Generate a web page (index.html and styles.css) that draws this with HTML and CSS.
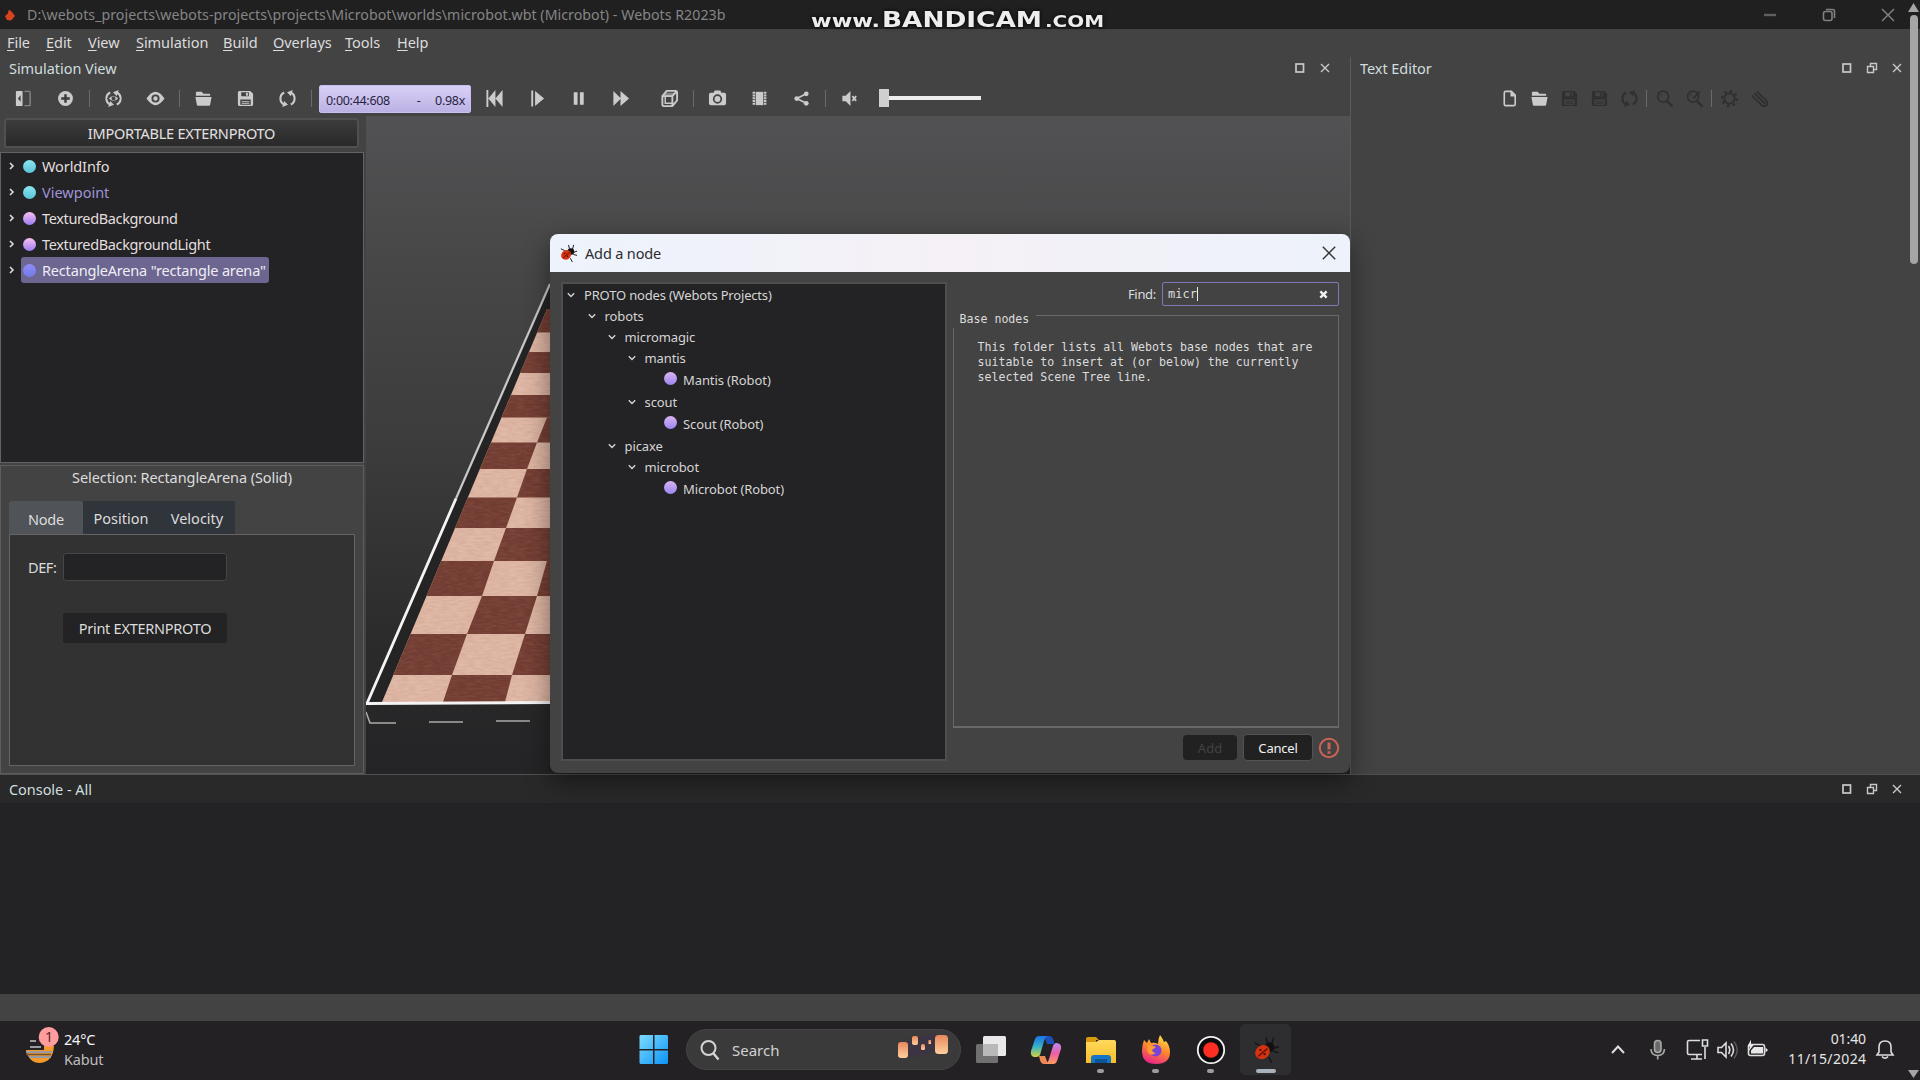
FILE: index.html
```html
<!DOCTYPE html>
<html lang="en">
<head>
<meta charset="utf-8">
<title>Webots R2023b</title>
<link rel="stylesheet" href="styles.css">
</head>
<body>
<svg class="defs" width="0" height="0" aria-hidden="true">
  <defs>
    <linearGradient id="fox" x1="0.7" y1="0" x2="0.3" y2="1"><stop offset="0" stop-color="#ffe14d"/><stop offset=".45" stop-color="#ff8a2a"/><stop offset="1" stop-color="#e9218c"/></linearGradient>
    <linearGradient id="win" x1="0" y1="0" x2="1" y2="1"><stop offset="0" stop-color="#7fdcff"/><stop offset="1" stop-color="#0b93f5"/></linearGradient>
    <linearGradient id="cop1" x1="0" y1="0" x2="0" y2="1"><stop offset="0" stop-color="#1b72e8"/><stop offset=".5" stop-color="#35b0c8"/><stop offset="1" stop-color="#d5d53c"/></linearGradient>
    <linearGradient id="cop2" x1="0" y1="0" x2="0" y2="1"><stop offset="0" stop-color="#b98bf5"/><stop offset=".5" stop-color="#ec5fa5"/><stop offset="1" stop-color="#ff9b5e"/></linearGradient>
    <linearGradient id="lamp" x1="0" y1="0" x2="0" y2="1"><stop offset="0" stop-color="#e8875c"/><stop offset="1" stop-color="#ffd09c"/></linearGradient>
    <linearGradient id="folder" x1="0" y1="0" x2="0" y2="1"><stop offset="0" stop-color="#ffd95e"/><stop offset="1" stop-color="#f8bd26"/></linearGradient>
  </defs>
  <symbol id="i-save" viewBox="0 0 20 20"><path fill="currentColor" fill-rule="evenodd" d="M3 2h12l3 3v11a2 2 0 0 1-2 2H4a2 2 0 0 1-2-2V3.500z M5.500 3.500v4h8v-4z M4.500 11v5.500h11V11z"/><path fill="currentColor" d="M10.500 4h2v3h-2zM6 12.500h8v1H6zM6 14.500h8v1H6z"/></symbol>
  <symbol id="i-open" viewBox="0 0 20 20"><path fill="currentColor" d="M2 7V4q0-1 1-1h5l2 2h6q1 0 1 1v1zM1.500 8.500h17L17 16.500q-.2 1-1.200 1H4.200q-1 0-1.200-1z"/></symbol>
  <symbol id="i-reload" viewBox="0 0 20 20"><path fill="none" stroke="currentColor" stroke-width="2.200" d="M6.500 3.700A7 7 0 0 0 6.500 16.300M13.500 16.300A7 7 0 0 0 13.500 3.700"/><path fill="currentColor" d="M4.500 19l6-2.300-4-4.200zM15.500 1l-6 2.300 4 4.200z"/></symbol>
  <symbol id="i-lens" viewBox="0 0 20 20"><circle cx="8.500" cy="8" r="5.800" fill="none" stroke="currentColor" stroke-width="1.800"/><path stroke="currentColor" stroke-width="2.600" d="M12.500 12.500l6 6"/><path fill="none" stroke="currentColor" d="M5.500 8a3 3 0 0 1 2-3"/></symbol>
  <symbol id="i-max" viewBox="0 0 12 12"><rect x="2" y="2" width="7.500" height="8" fill="none" stroke="currentColor" stroke-width="1.700"/></symbol>
  <symbol id="i-float" viewBox="0 0 12 12"><path fill="none" stroke="currentColor" stroke-width="1.400" d="M1.500 4.500h6v6h-6zM4.500 4V1.500h6v6H8"/></symbol>
  <symbol id="i-x" viewBox="0 0 12 12"><path stroke="currentColor" stroke-width="1.400" d="M2 2l8 8M10 2l-8 8"/></symbol>
  <symbol id="i-right" viewBox="0 0 10 10"><path fill="none" stroke="currentColor" stroke-width="1.600" d="M3 2L6 5 3 8"/></symbol>
  <symbol id="i-down" viewBox="0 0 10 10"><path fill="none" stroke="currentColor" stroke-width="1.400" d="M1.800 3.200L5 6.400l3.200-3.200"/></symbol>
  <symbol id="i-bug" viewBox="0 0 20 20"><path fill="none" stroke="#15151a" stroke-width="1" d="M11 5l-1-4M14 6l1.500-5M15 9l4-1.500M15 11l4 1M12 15l2 4M6 7L2 5"/><circle cx="12.500" cy="8" r="3.500" fill="#111"/><ellipse cx="7.500" cy="11.500" rx="5.500" ry="4.800" transform="rotate(-40 7.500 11.500)" fill="#d7320f"/><path stroke="#5c1205" d="M4.500 14.500L11 9"/><circle cx="6" cy="10" r=".8" fill="#3a0d05"/><circle cx="9" cy="13" r=".8" fill="#3a0d05"/></symbol>
</svg>

<header class="titlebar">
  <svg class="app-icon" viewBox="0 0 12 14"><path fill="#d8431d" d="M5 1.500L8 4l3 4-4 4.500L3 12 1 8l2.500-2z"/></svg>
  <span class="win-title">D:\webots_projects\webots-projects\projects\Microbot\worlds\microbot.wbt (Microbot) - Webots R2023b</span>
  <div class="win-buttons">
    <svg width="14" height="14"><path stroke="#606060" stroke-width="2.400" d="M1 7h12"/></svg>
    <svg width="14" height="14" fill="none" stroke="#808080" stroke-width="1.600"><rect x="1.500" y="3.500" width="8.500" height="9" rx="2"/><path d="M4 1.500h6.500q2 0 2 2V10"/></svg>
    <svg width="14" height="14" stroke="#858585" stroke-width="1.400"><path d="M1 1l12 12M13 1L1 13"/></svg>
  </div>
</header>

<nav class="menubar">
  <span><u>F</u>ile</span><span><u>E</u>dit</span><span><u>V</u>iew</span><span><u>S</u>imulation</span><span><u>B</u>uild</span><span><u>O</u>verlays</span><span><u>T</u>ools</span><span><u>H</u>elp</span>
</nav>

<main class="docks">
  <section class="sim">
    <div class="dock-title">Simulation View
      <div class="dock-buttons"><svg><use href="#i-max"/></svg><svg><use href="#i-x"/></svg></div>
    </div>
    <div class="toolbar">
      <span class="tool"><svg viewBox="0 0 20 20"><path fill="currentColor" fill-rule="evenodd" d="M3 2h6v16H3q-1 0-1-1V3q0-1 1-1zM7 6.500L4 10l3 3.500z"/><path fill="none" stroke="#858585" stroke-width="1.500" d="M11 2.500h5q1 0 1 1v13q0 1-1 1h-5"/></svg></span>
      <span class="tool"><svg viewBox="0 0 20 20"><circle cx="10" cy="10" r="7.800" fill="currentColor"/><path stroke="#3d3d3e" stroke-width="2.600" d="M10 5.500v9M5.500 10h9"/></svg></span>
      <i class="sep"></i>
      <span class="tool"><svg><use href="#i-reload"/></svg><svg class="over" viewBox="0 0 20 20"><path fill="currentColor" stroke="#434344" stroke-width="1.500" fill-rule="evenodd" d="M2.500 10q7.500-8 15 0-7.500 8-15 0zM10 8a2 2 0 1 0 .1 0z"/></svg></span>
      <span class="tool"><svg viewBox="0 0 20 20"><path fill="currentColor" d="M.5 10Q10-4 19.500 10 10 24 .5 10z"/><circle cx="10" cy="10" r="3.300" fill="currentColor" stroke="#434344" stroke-width="2"/></svg></span>
      <i class="sep"></i>
      <span class="tool"><svg><use href="#i-open"/></svg></span>
      <span class="tool"><svg><use href="#i-save"/></svg></span>
      <span class="tool"><svg><use href="#i-reload"/></svg></span>
      <i class="sep"></i>
      <div class="clock"><span>0:00:44:608</span><span>-</span><span>0.98x</span></div>
      <span class="tool"><svg viewBox="0 0 20 20"><path fill="currentColor" d="M1.500 1h2v18h-2zM11 1v18L3.500 10zM18.500 1v18L11 10z"/></svg></span>
      <span class="tool"><svg viewBox="0 0 20 20"><path fill="currentColor" d="M4.500 1.500h2v17h-2zM8.500 2L18 10l-9.500 8z"/></svg></span>
      <span class="tool"><svg viewBox="0 0 20 20"><path fill="currentColor" d="M5 3.500h4v13H5zM11.500 3.500h4v13h-4z"/></svg></span>
      <span class="tool"><svg viewBox="0 0 20 20"><path fill="currentColor" d="M2.500 2l8 8-8 8zM10 2l9 8-9 8z"/></svg></span>
      <span class="tool cube"><svg viewBox="0 0 20 20"><path fill="none" stroke="currentColor" stroke-width="2" d="M3 7l4-5h9.500q1.500 0 1.500 1.500V12l-5 6H4q-1.500 0-1.500-1.500V7.500H13V18M13 7.500l4.500-5"/><path fill="currentColor" d="M3 7l3-3h11l-4 4z" opacity=".5"/><path fill="none" stroke="currentColor" stroke-width="1.500" d="M5.500 8v7H13"/></svg></span>
      <i class="sep"></i>
      <span class="tool"><svg viewBox="0 0 20 20"><path fill="currentColor" d="M6 4l1-2.500h6L14 4h3q2 0 2 2v9q0 2-2 2H3q-2 0-2-2V6q0-2 2-2z"/><circle cx="10" cy="10.500" r="4" fill="none" stroke="#434344" stroke-width="1.800"/></svg></span>
      <span class="tool"><svg viewBox="0 0 20 20"><path fill="currentColor" d="M6 3h8v14H6z"/><path stroke="currentColor" stroke-width="2.500" stroke-dasharray="1.900 1" d="M4 3v14.500M16 3v14.500"/></svg></span>
      <span class="tool"><svg viewBox="0 0 20 20"><path stroke="currentColor" stroke-width="1.700" fill="none" d="M15 5L5 10l10 5"/><g fill="currentColor"><circle cx="15" cy="5" r="2.500"/><circle cx="5" cy="10" r="2.500"/><circle cx="15" cy="15" r="2.500"/></g></svg></span>
      <i class="sep"></i>
      <span class="tool"><svg viewBox="0 0 20 20"><path fill="currentColor" d="M2.500 7H6l5-5v16l-5-5H2.500z"/><path stroke="currentColor" stroke-width="1.800" d="M13 7.500l4 5M17 7.500l-4 5"/></svg></span>
      <div class="slider"><b></b></div>
    </div>

    <div class="sim-body">
      <aside class="side">
        <div class="extern">IMPORTABLE EXTERNPROTO</div>
        <div class="scene-tree">
          <div class="node"><svg><use href="#i-right"/></svg><span><i class="ball cyan"></i>WorldInfo</span></div>
          <div class="node view"><svg><use href="#i-right"/></svg><span><i class="ball cyan"></i>Viewpoint</span></div>
          <div class="node tight"><svg><use href="#i-right"/></svg><span><i class="ball pink"></i>TexturedBackground</span></div>
          <div class="node tight"><svg><use href="#i-right"/></svg><span><i class="ball pink"></i>TexturedBackgroundLight</span></div>
          <div class="node picked"><svg><use href="#i-right"/></svg><span><i class="ball blue"></i>RectangleArena "rectangle arena"</span></div>
        </div>
        <div class="selection">
          <div class="sel-title">Selection: RectangleArena (Solid)</div>
          <div class="tabs"><span class="tab on">Node</span><span class="tab">Position</span><span class="tab">Velocity</span></div>
          <div class="tab-body">
            <span class="def">DEF:</span><div class="def-field"></div>
            <div class="print">Print EXTERNPROTO</div>
          </div>
        </div>
      </aside>
      <div class="view3d">
        <svg width="984" height="658" viewBox="366 116 984 658">
          <defs>
            <filter id="grain" x="0" y="0" width="1" height="1"><feTurbulence type="fractalNoise" baseFrequency=".12 .5" numOctaves="2" seed="4"/><feColorMatrix values="0 0 0 0 .45  0 0 0 0 .2  0 0 0 0 .15  .9 0 0 0 -.3"/></filter>
            <clipPath id="floor"><path d="M382 702L547 309H560V702z"/></clipPath>
          </defs>
          <path fill="#242425" d="M366 704L550 284H570V704z"/>
          <g clip-path="url(#floor)">
            <path fill="#e0b9a7" d="M382 300H560V702H382z"/>
            <g fill="#713c32">
              <path d="M443 702L452 675 512 675 505 702z"/>
              <path d="M380 675L398 634H467L452 675zM512 675L525 634H560V675z"/>
              <path d="M467 634L482 596H537L525 634z"/>
              <path d="M414 596L429 561H494L482 596zM537 596L547 561H560V596z"/>
              <path d="M494 561L506 528H560V561z"/>
              <path d="M440 528L456 497.500H517L506 528z"/>
              <path d="M517 497.500L527 469H560V497.500z"/>
              <path d="M466 469L480 442.500H537L527 469z"/>
              <path d="M537 442.500L547 417.500H560V442.500z"/>
              <path d="M488 417.500L500 395H560V417.500z"/>
              <path d="M508 373L518 352H560V373z"/>
              <path d="M524 332.500L537 309H560V332.500z"/>
            </g>
            <path d="M382 300H560V702H382z" filter="url(#grain)" opacity=".45"/>
          </g>
          <path fill="none" stroke="#c9c9c9" stroke-width="2.200" d="M550 284L456 498.500"/>
          <path fill="none" stroke="#f4f4f4" stroke-width="2.800" d="M456 498.500L367 703.500 552 702.500"/>
          <path fill="none" stroke="#aaa" stroke-width="1.600" d="M366 712L370 723H396M429 722H463M496 721H530"/>
        </svg>
      </div>
    </div>
  </section>

  <section class="editor">
    <div class="dock-title">Text Editor
      <div class="dock-buttons"><svg><use href="#i-max"/></svg><svg><use href="#i-float"/></svg><svg><use href="#i-x"/></svg></div>
    </div>
    <div class="toolbar">
      <span class="tool"><svg viewBox="0 0 20 20"><path fill="none" stroke="currentColor" stroke-width="1.700" d="M6 2.500h6l4 4V16q0 1.500-1.500 1.500H6Q4.500 17.500 4.500 16V4Q4.500 2.500 6 2.500z"/><path fill="currentColor" d="M11 2v6h5.500z"/></svg></span>
      <span class="tool"><svg><use href="#i-open"/></svg></span>
      <span class="tool off"><svg><use href="#i-save"/></svg></span>
      <span class="tool off"><svg><use href="#i-save"/></svg></span>
      <span class="tool off"><svg><use href="#i-reload"/></svg></span>
      <i class="sep"></i>
      <span class="tool off"><svg><use href="#i-lens"/></svg></span>
      <span class="tool off"><svg><use href="#i-lens"/></svg><svg class="over" viewBox="0 0 20 20"><path stroke="currentColor" stroke-width="2.400" d="M8 10l9-9"/></svg></span>
      <i class="sep"></i>
      <span class="tool off"><svg viewBox="0 0 20 20"><circle cx="10" cy="10" r="5.500" fill="none" stroke="currentColor" stroke-width="2"/><circle cx="10" cy="10" r="7.800" fill="none" stroke="currentColor" stroke-width="2.600" stroke-dasharray="2.600 3.520"/></svg></span>
      <span class="tool off"><svg viewBox="0 0 20 20"><path fill="none" stroke="currentColor" stroke-width="2" d="M2 7l11 10.500q3 1.500 5-1M4.500 4.500L16 15.500M7 2.500L18 13v4"/></svg></span>
    </div>
  </section>
</main>

<section class="console">
  <div class="dock-title">Console - All
    <div class="dock-buttons"><svg><use href="#i-max"/></svg><svg><use href="#i-float"/></svg><svg><use href="#i-x"/></svg></div>
  </div>
  <div class="console-body"></div>
</section>
<div class="status"></div>

<footer class="taskbar">
  <div class="weather">
    <svg width="36" height="40" viewBox="24 1026 36 40"><path fill="#f49a2c" d="M26 1050Q29 1063 40 1063 53 1062 54 1046H44V1050z"/><path stroke="#989ba2" stroke-width="1.800" d="M30 1041h6M30 1047h11M26 1052h26M29 1057h22"/><path stroke="#6b563c" stroke-width="1.600" d="M26 1054.500h25"/><circle cx="48.700" cy="1037" r="10" fill="#ff9c9d"/><text x="45" y="1042" class="badge">1</text></svg>
    <div class="wtext"><b>24°C</b><span>Kabut</span></div>
  </div>

  <div class="apps">
    <svg class="start" width="30" height="32" viewBox="0 0 30 32"><path fill="url(#win)" d="M1.500 1H14v14H.5V2zM15.500 1H28l1 1v13H15.500zM.5 16.500H14V30H1.500l-1-1zM15.500 16.500H29V29l-1 1H15.500z"/></svg>
    <div class="search">
      <svg width="20" height="22" viewBox="0 0 20 22"><circle cx="8.500" cy="9" r="7" fill="none" stroke="#d4d4d4" stroke-width="2"/><path stroke="#d4d4d4" stroke-width="2.400" d="M13.500 14.500l5 6"/></svg>
      <span>Search</span>
      <svg class="lamps" width="52" height="30" viewBox="0 0 52 30"><path fill="#3d3048" d="M10 8l30-6v18l-28 8z" opacity=".6"/><g fill="url(#lamp)"><rect x="1" y="11" width="10" height="16" rx="3"/><rect x="15" y="5" width="6" height="9" rx="2"/><rect x="24" y="13" width="4" height="6" rx="1.500"/><rect x="31.500" y="9" width="2.500" height="4"/><rect x="38" y="4" width="13" height="19" rx="3.500"/></g></svg>
    </div>
    <svg width="32" height="30" viewBox="0 0 32 30"><rect x="8" y="1" width="23" height="20" rx="1.500" fill="#e9e9e9"/><rect x="1" y="9" width="22" height="19" rx="1.500" fill="#858585" opacity=".8"/><path fill="#b9b9b9" d="M8 9h15v12H8z"/></svg>
    <svg width="32" height="30" viewBox="0 0 32 30"><path fill="#1c4fb8" d="M14 1h5q3 0 4 3l1.500 5H17z"/><path fill="url(#cop1)" d="M9 1h9q-3 1-4 5l-4 14q-1 2-4 2H4q-4-1-3-6L5 4Q6 1 9 1z"/><path fill="#f08a55" d="M9 21h6l3 8h-4q-3 0-4-4z"/><path fill="url(#cop2)" d="M24 29h-9q3-1 4-5l4-13q1-3 4-3 5 1 4 6l-4 12q-1 3-3 3z"/></svg>
    <span class="app"><svg width="32" height="28" viewBox="0 0 32 28"><path fill="#d99a0e" d="M1 3q0-2 2-2h8l3 3h-3v5H1z"/><path fill="url(#folder)" d="M1 6h10l3-2h15q2 0 2 2v21H1z"/><path fill="#1674c5" d="M6 27v-5q0-3 3-3h14q3 0 3 3v5z"/><path fill="#0d5596" d="M10 23h12v4H10z"/></svg></span>
    <span class="app"><svg width="30" height="30" viewBox="0 0 30 30"><path fill="url(#fox)" d="M3 5l3 3 2-4 2 4q4-1 7 1 0-5 2-9 3 4 4 7l2-1q4 5 4 11 0 12-14 12Q1 29 1 16 1 10 3 5z"/><circle cx="14.500" cy="15.500" r="6" fill="#7843d8"/><path fill="#ff9c2f" d="M7 10q5 0 8 2l-4 3q1 3 4 3-6 4-9-2z"/></svg></span>
    <span class="app"><svg width="30" height="30" viewBox="0 0 30 30"><circle cx="15" cy="15" r="13.200" fill="#0c0c0d" stroke="#f2f2f2" stroke-width="1.800"/><circle cx="15" cy="15" r="7.800" fill="#ff2e24"/></svg></span>
    <span class="app active"><svg width="28" height="28"><use href="#i-bug"/></svg></span>
  </div>

  <div class="tray">
    <svg width="292" height="40" viewBox="1610 1030 292 40" fill="none" stroke="#dedede" stroke-width="1.600">
      <path stroke-width="2" d="M1612 1053l6-6.500 6 6.500"/>
      <g stroke="#a9a9a9"><rect x="1654.500" y="1040.500" width="6.500" height="12" rx="3.200" fill="#6a6a6a"/><path d="M1651 1049q0 6.500 6.700 6.500t6.700-6.500M1657.700 1056v3.500"/></g>
      <path d="M1700 1040.500h-11q-1.500 0-1.500 1.500v11q0 1.500 1.500 1.500h13M1697 1055v4M1691 1059h11M1705 1047v12M1702.500 1040v6h5v-6z"/>
      <path d="M1718 1047.500h3.500l4.500-4.500v14l-4.500-4.500h-3.500zM1728.500 1046q2.500 4 0 8M1731 1043.500q5 6.500 0 13"/><path stroke="#555" d="M1734 1041.500q6.500 8.500 0 17"/>
      <rect x="1748.500" y="1044.500" width="16" height="11" rx="2"/><path fill="#e8e8e8" stroke="none" d="M1754 1047h9v6.500h-12v-3zM1765.500 1047.500l2.500 2.500-2.500 2.500zM1751 1039.500l-3.500 7h2.500l-1.500 5 5.500-7h-3z"/>
      <path d="M1877 1055l2-3v-5q0-6 6-6t6 6v5l2 3zM1882 1056.500q3 3.500 6 0"/>
    </svg>
    <div class="datetime"><span>01:40</span><span class="date">11/15/2024</span></div>
  </div>
</footer>

<div class="dialog">
  <div class="dlg-title"><svg class="bug"><use href="#i-bug"/></svg><span>Add a node</span><svg class="close" viewBox="0 0 14 14"><path stroke="#333" stroke-width="1.400" d="M.8.8l12.400 12.400M13.200.8L.8 13.200"/></svg></div>
  <div class="dlg-body">
    <div class="proto-tree">
      <div class="row l0"><svg><use href="#i-down"/></svg><span>PROTO nodes (Webots Projects)</span></div>
      <div class="row l1"><svg><use href="#i-down"/></svg><span>robots</span></div>
      <div class="row l2"><svg><use href="#i-down"/></svg><span>micromagic</span></div>
      <div class="row l3"><svg><use href="#i-down"/></svg><span>mantis</span></div>
      <div class="row leaf"><i class="ball lilac"></i><span>Mantis (Robot)</span></div>
      <div class="row l3"><svg><use href="#i-down"/></svg><span>scout</span></div>
      <div class="row leaf"><i class="ball lilac"></i><span>Scout (Robot)</span></div>
      <div class="row l2"><svg><use href="#i-down"/></svg><span>picaxe</span></div>
      <div class="row l3"><svg><use href="#i-down"/></svg><span>microbot</span></div>
      <div class="row leaf"><i class="ball lilac"></i><span>Microbot (Robot)</span></div>
    </div>
    <div class="dlg-right">
      <div class="find"><span>Find:</span><div class="find-field"><span>micr</span><svg viewBox="0 0 10 10"><path stroke="#f2f2f2" stroke-width="2.600" d="M1.500 1.500l7 7M8.500 1.500l-7 7"/></svg></div></div>
      <fieldset class="info"><legend>Base nodes</legend>This folder lists all Webots base nodes that are<br>suitable to insert at (or below) the currently<br>selected Scene Tree line.</fieldset>
      <div class="dlg-buttons"><span class="btn add">Add</span><span class="btn cancel">Cancel</span><svg width="22" height="22"><circle cx="11" cy="11" r="9.200" fill="none" stroke="#cd6253" stroke-width="2"/><path stroke="#cd6253" stroke-width="3" d="M11 5.500v7M11 14.200v2.500"/></svg></div>
    </div>
  </div>
</div>

<svg class="watermark" width="310" height="36" viewBox="804 0 310 36"><g class="glow"><text x="811" y="27" class="wm small" textLength="69" lengthAdjust="spacingAndGlyphs">www.</text><text x="882" y="27" class="wm big" textLength="160" lengthAdjust="spacingAndGlyphs">BANDICAM</text><text x="1045" y="27" class="wm com" textLength="59" lengthAdjust="spacingAndGlyphs">.COM</text></g></svg>

<div class="scrollbar"><svg width="11" height="10"><path fill="#a5a5a5" d="M5.500 1L11 10H0z"/></svg><i></i><svg class="dn" width="11" height="8"><path fill="#a5a5a5" d="M0 0h11L5.500 8z"/></svg></div>
</body>
</html>
```

FILE: styles.css
```css
* { box-sizing: border-box; }
html, body { margin: 0; }
body {
  width: 1920px; height: 1080px; overflow: hidden; position: relative;
  display: flex; flex-direction: column;
  background: #434344; color: #dcdcdc;
  font: 14.5px/20px "Noto Sans", "Open Sans", sans-serif;
  white-space: nowrap;
}
svg { display: block; flex: none; }
.defs { position: absolute; }
use { width: 100%; height: 100%; }

/* window frame */
.titlebar { height: 29px; flex: none; display: flex; align-items: center; background: #202021; color: #858585; padding-left: 4px; }
.app-icon { width: 12px; height: 14px; margin-right: 11px; }
.win-title { font-size: 14.2px; letter-spacing: .035px; }
.win-buttons { margin-left: auto; display: flex; gap: 45px; padding-right: 25px; }
.menubar { height: 28px; flex: none; display: grid; grid-template-columns: 39px 42px 48px 87px 50px 72px 52px 60px; align-items: center; padding: 0 0 2px 7px; letter-spacing: -.05px; }
.menubar u { text-underline-offset: 2px; }

/* docks */
.docks { height: 717px; flex: none; display: flex; }
.sim { width: 1350px; display: flex; flex-direction: column; }
.editor { flex: 1; border-left: 1px solid #5a5a5b; }
.dock-title { height: 23px; display: flex; align-items: center; padding: 0 0 2px 9px; color: #cfdede; letter-spacing: -.05px; }
.editor .dock-title { padding-right: 0; }
.dock-buttons { margin-left: auto; display: flex; gap: 13px; padding-right: 18px; color: #c8c8c8; }
.sim .dock-buttons { padding-right: 19px; }
.editor .dock-buttons, .console .dock-buttons { padding-right: 17px; }
.dock-buttons svg { width: 12px; height: 12px; }
.toolbar { height: 36px; display: flex; align-items: center; padding-left: 2px; color: #cbcbcb; }
.tool { width: 42px; height: 20px; display: grid; place-items: center; flex: none; }
.tool svg { width: 19px; height: 19px; grid-area: 1 / 1; }
.tool .over { width: 15px; height: 15px; }
.tool.off { color: #303031; }
.tool.cube { margin-left: 7px; }
.sep { width: 6px; height: 17px; flex: none; background: linear-gradient(#6a6a6a, #6a6a6a) center / 1px 100% no-repeat; }
.clock { width: 152px; height: 28px; margin: 2px 2px 0 5px; padding: 3px 5px 0 6px; display: flex; align-items: center; justify-content: space-between; background: linear-gradient(#d9d0f7, #bcb1e3); border: 1px solid #c8bff0; border-radius: 2px; color: #26243f; font-size: 12.5px; letter-spacing: -.3px; }
.clock span:first-child { margin-right: 12px; }
.slider { width: 102px; height: 18px; margin: -1px 0 0 9px; display: flex; background: linear-gradient(#ededed, #ededed) center / 100% 4px no-repeat; }
.slider b { width: 10px; height: 18px; background: #cfcfcf; }
.editor .toolbar { padding-left: 143px; }
.editor .tool { width: 30px; }
.editor .sep { width: 5px; }

.sim-body { flex: 1; display: flex; }
.side { width: 366px; display: flex; flex-direction: column; padding: 2px 2px 0 0; }
.extern { height: 30px; margin: 0 5px 4px 4px; display: flex; align-items: center; justify-content: center; background: linear-gradient(#3c3c3d, #29292a); border: 2px solid #505051; border-radius: 3px; color: #e4e0e0; letter-spacing: -.25px; }
.scene-tree { height: 311px; margin-bottom: 2px; border: 1px solid #626263; background: #232224; }
.node { height: 26px; display: flex; align-items: center; padding-left: 6px; }
.node > svg { width: 10px; height: 10px; margin-right: 4px; }
.node span { height: 26px; display: flex; align-items: center; padding: 0 3px 0 2px; color: #e2dfdf; letter-spacing: -.1px; }
.node.view span { color: #9f94d8; letter-spacing: 0; }
.node.tight span { letter-spacing: -.36px; }
.node.picked span { background: #6c6690; border-radius: 3px; color: #f0edf5; letter-spacing: -.18px; }
.ball { width: 13px; height: 13px; border-radius: 50%; margin-right: 6px; flex: none; }
.cyan { background: linear-gradient(#8ae6ee, #5bc3d8); }
.pink { background: linear-gradient(#f8bff0, #9d7df2); }
.blue { background: linear-gradient(#8f8cf6, #727be8); }
.lilac { background: linear-gradient(#d8b4f0, #9c86f2); }
.selection { height: 309px; border: 1px solid #5e5e5f; padding: 0 8px; }
.sel-title { text-align: center; height: 35px; line-height: 22px; letter-spacing: -.08px; }
.tabs { display: flex; height: 33px; }
.tab { width: 76px; background: #30343b; text-align: center; line-height: 35px; }
.tab.on { width: 74px; background: #505358; line-height: 37px; border-radius: 3px 3px 0 0; letter-spacing: -.2px; }
.tab-body { height: 232px; border: 1px solid #646465; background: #323233; display: grid; grid-template-columns: 35px 164px; grid-template-rows: 28px 30px; row-gap: 32px; padding: 18px 0 0 18px; align-items: center; }
.def { letter-spacing: -.4px; }
.def-field { height: 28px; border: 1px solid #464647; border-radius: 3px; background: #232224; }
.print { grid-column: 2; height: 30px; line-height: 30px; text-align: center; background: #232224; border-radius: 3px; letter-spacing: -.25px; }
.view3d { width: 984px; height: 658px; overflow: hidden; background: linear-gradient(#525254 0, #464647 25%, #3c3c3d 50%, #2b2b2c 80%, #242426 100%); }

/* console */
.console { height: 220px; flex: none; background: #232224; border-top: 1px solid #515152; }
.console .dock-title { height: 28px; background: #292929; padding-bottom: 0; }
.status { height: 27px; flex: none; background: #434344; }

/* taskbar */
.taskbar { height: 59px; flex: none; background: #232124; position: relative; display: grid; grid-template-columns: 639px 1fr 310px; }
.weather { display: flex; padding: 5px 0 0 24px; gap: 4px; }
.badge { font-size: 14px; fill: #56262b; }
.wtext { display: flex; flex-direction: column; padding-top: 3px; font-size: 14.5px; letter-spacing: -.2px; }
.wtext b { font-weight: 400; color: #f4f4f4; }
.wtext span { color: #bdbdbd; }
.apps { display: flex; align-items: center; height: 57px; }
.search { width: 275px; height: 41px; margin: 0 14px 0 17px; border-radius: 21px; background: #3a3a3b; border: 1px solid #454546; display: flex; align-items: center; padding: 0 11px 0 13px; color: #d2d2d2; font-size: 15px; }
.search span { margin-left: 12px; }
.lamps { margin-left: auto; margin-top: -7px; }
.apps > svg + svg { margin-left: 23px; }
.app { width: 51px; height: 51px; display: grid; place-items: center; position: relative; margin-left: 4px; }
.apps > svg + .app { margin-left: 13px; }
.app::after { content: ""; position: absolute; bottom: 2px; left: 22px; width: 7px; height: 4px; border-radius: 2px; background: #9c9c9c; }
.app.active { background: #2e2e30; border-radius: 5px; }
.app.active::after { left: 16px; width: 20px; background: #a9b2ba; }
.tray { display: grid; height: 50px; }
.tray > * { grid-area: 1 / 1; }
.tray > svg { margin-top: 9px; }
.datetime { justify-self: end; margin-right: 54px; padding-top: 8px; display: flex; flex-direction: column; text-align: right; font-size: 14px; color: #e6e6e6; letter-spacing: -.1px; }
.date { letter-spacing: .36px; margin-right: -.4px; }

/* dialog */
.dialog { position: absolute; left: 550px; top: 234px; width: 800px; height: 539px; border-radius: 8px; overflow: hidden; background: #434344; box-shadow: 0 8px 26px rgba(0, 0, 0, .45); display: flex; flex-direction: column; }
.dlg-title { height: 38px; flex: none; background: linear-gradient(90deg, #edf3fc, #f5f1f6 50%, #edf2fb); color: #2c2c30; display: flex; align-items: center; padding: 0 14px 0 9px; letter-spacing: -.15px; }
.bug { width: 19px; height: 19px; margin-right: 7px; }
.close { width: 14px; height: 14px; margin-left: auto; }
.dlg-body { flex: 1; display: flex; padding: 10px 11px 0 11px; }
.proto-tree { width: 386px; height: 479px; border: 2px solid #4e4e4f; background: #232224; font-size: 13px; color: #d5d5d5; letter-spacing: -.1px; }
.proto-tree .row:first-child { letter-spacing: -.18px; }
.row { height: 21px; display: flex; align-items: center; }
.row svg { width: 10px; height: 10px; margin-right: 8px; }
.l0 { padding-left: 3px; }
.l1 { padding-left: 23.5px; }
.l2 { padding-left: 43.5px; }
.l3 { padding-left: 63.5px; }
.leaf { height: 23px; padding-left: 101px; }
.leaf .ball { margin-top: -2px; }
.dlg-right { width: 387px; margin-left: 6px; }
.find { height: 24px; display: flex; justify-content: flex-end; align-items: center; gap: 6px; font-size: 13px; letter-spacing: -.3px; }
.find-field { width: 177px; height: 24px; border: 1px solid #8177b4; border-radius: 2px; display: flex; align-items: center; justify-content: space-between; padding: 0 10px 0 5px; font: 12px "DejaVu Sans Mono", monospace; letter-spacing: 0; }
.find-field span { border-right: 1px solid #eee; line-height: 14px; }
.find-field svg { width: 9px; height: 9px; }
.info { position: relative; height: 413px; margin: 9px 0 0; border: 1px solid #69696a; border-bottom-width: 2px; padding: 24px 0 0 24px; font: 11.6px/15.1px "DejaVu Sans Mono", monospace; color: #dcdcdc; }
.info legend { position: absolute; left: -2px; top: -4px; width: 84px; padding: 0 0 0 8px; height: 16px; background: #434344; }
.dlg-buttons { display: flex; justify-content: flex-end; align-items: center; margin: 6px -1px 0 0; font-size: 13px; }
.btn { height: 27px; line-height: 26px; text-align: center; background: #212122; border-radius: 4px; }
.add { width: 54px; color: #414142; margin-right: 6px; height: 25px; }
.cancel { width: 70px; border: 1px solid #535354; margin-right: 5px; color: #f2f2f2; letter-spacing: -.2px; }

/* overlays on top of the desktop */
.watermark { position: absolute; left: 804px; top: 0; }
.wm { font-family: "DejaVu Sans", sans-serif; font-weight: 700; fill: #ededed; }
.small { font-size: 17px; }
.big { font-size: 22px; }
.com { font-size: 16px; }
.glow { filter: drop-shadow(0 0 2px #000); }
.scrollbar { position: absolute; right: 0; top: 2px; width: 12px; height: 1076px; display: flex; flex-direction: column; }
.scrollbar i { width: 8px; height: 249px; margin: 3px 0 0 2px; border-radius: 4px; background: #a5a5a5; }
.scrollbar .dn { margin-top: auto; }
```
